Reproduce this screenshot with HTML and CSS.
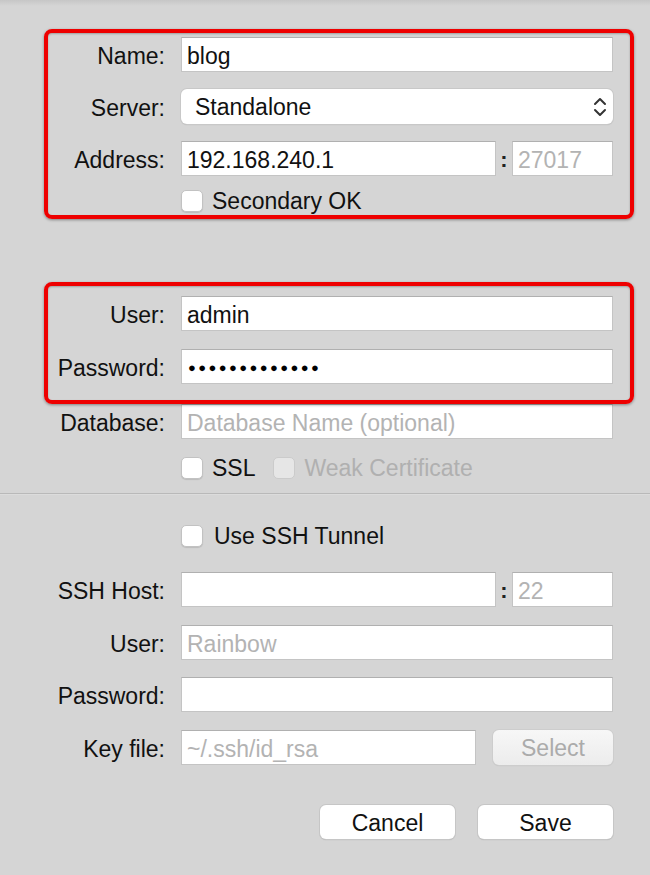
FILE: index.html
```html
<!DOCTYPE html>
<html>
<head>
<meta charset="utf-8">
<link rel="stylesheet" href="styles.css">
</head>
<body>
<div class="win">
  <div class="topshade"></div>

  <div class="row r-name">
    <div class="label">Name:</div>
    <div class="field">blog</div>
  </div>
  <div class="row">
    <div class="label">Server:</div>
    <div class="popup">
      <span>Standalone</span>
      <svg class="updown" width="14" height="22" viewBox="0 0 14 22"><path d="M2 8 L7 3 L12 8 M2 14 L7 19 L12 14" fill="none" stroke="#333" stroke-width="2" stroke-linecap="round" stroke-linejoin="round"/></svg>
    </div>
  </div>
  <div class="row">
    <div class="label">Address:</div>
    <div class="field">192.168.240.1</div>
    <div class="colon">:</div>
    <div class="field port ph">27017</div>
  </div>
  <div class="checkrow r-secondary">
    <span class="box"></span><span class="ctext">Secondary OK</span>
  </div>

  <div class="row r-user">
    <div class="label">User:</div>
    <div class="field">admin</div>
  </div>
  <div class="row r-pass">
    <div class="label">Password:</div>
    <div class="field dots">●●●●●●●●●●●●●</div>
  </div>
  <div class="row r-db">
    <div class="label">Database:</div>
    <div class="field ph">Database Name (optional)</div>
  </div>
  <div class="checkrow r-ssl">
    <span class="box"></span><span class="ctext">SSL</span>
    <span class="box disabled"></span><span class="ctext disabled-text">Weak Certificate</span>
  </div>

  <div class="separator"></div>

  <div class="checkrow r-tunnel">
    <span class="box"></span><span class="ctext wide">Use SSH Tunnel</span>
  </div>

  <div class="row r-host">
    <div class="label">SSH Host:</div>
    <div class="field"></div>
    <div class="colon">:</div>
    <div class="field port ph">22</div>
  </div>
  <div class="row r-suser">
    <div class="label">User:</div>
    <div class="field ph">Rainbow</div>
  </div>
  <div class="row r-spass">
    <div class="label">Password:</div>
    <div class="field"></div>
  </div>
  <div class="row r-key">
    <div class="label">Key file:</div>
    <div class="field ph">~/.ssh/id_rsa</div>
    <div class="btn select">Select</div>
  </div>

  <div class="actions">
    <div class="btn cancel">Cancel</div>
    <div class="btn save">Save</div>
  </div>

  <div class="mark mark1"></div>
  <div class="mark mark2"></div>
</div>
</body>
</html>
```

FILE: styles.css
```css
html, body {
  margin: 0;
  padding: 0;
}
body {
  background: #d5d5d5;
  font-family: "Liberation Sans", Arial, sans-serif;
  color: #111;
}
.win {
  position: relative;
  width: 650px;
  height: 875px;
  overflow: hidden;
  background: #d5d5d5;
}
.topshade {
  height: 6px;
  background: linear-gradient(#c6c6c6, #d5d5d5);
}
.row {
  display: flex;
  align-items: center;
  height: 35px;
  padding-right: 37px;
  margin-top: 17px;
}
.r-name { margin-top: 31px; }
.label {
  flex: none;
  width: 165px;
  margin-right: 16px;
  padding-top: 3px;
  text-align: right;
  font-size: 23px;
  color: #111;
}
.field {
  flex: 1;
  height: 35px;
  box-sizing: border-box;
  background: #fff;
  border: 1px solid #c4c4c4;
  border-top-color: #b0b0b0;
  font-size: 23px;
  padding-left: 5px;
  padding-top: 3px;
  display: flex;
  align-items: center;
  color: #111;
  white-space: nowrap;
  overflow: hidden;
}
.ph { color: #b3b3b3; }
.colon {
  flex: none;
  width: 16px;
  padding-top: 2px;
  text-align: center;
  font-size: 22px;
  font-weight: bold;
  color: #222;
}
.port {
  flex: none;
  width: 101px;
}
.popup {
  flex: 1;
  height: 35px;
  box-sizing: border-box;
  background: #fff;
  border-radius: 6px;
  box-shadow: 0 0 0 1px #c8c8c8, 0 1px 1px rgba(0,0,0,0.18);
  display: flex;
  align-items: center;
  justify-content: space-between;
  padding: 1px 6px 0 14px;
  font-size: 23px;
  color: #111;
}
.updown { display: block; }
.checkrow {
  display: flex;
  align-items: center;
  height: 23px;
  padding-left: 181px;
}
.r-secondary { margin-top: 13px; }
.box {
  flex: none;
  width: 22px;
  height: 22px;
  box-sizing: border-box;
  background: #fff;
  border: 1px solid #c2c2c2;
  border-radius: 5px;
  box-shadow: 0 1px 1px rgba(0,0,0,0.12);
}
.box.disabled {
  background: #e6e6e6;
  border-color: #cbcbcb;
  box-shadow: none;
  margin-left: 18px;
}
.ctext {
  margin-left: 9px;
  padding-top: 2px;
  font-size: 23px;
  color: #111;
}
.ctext.wide { margin-left: 11px; }
.disabled-text { color: #b0b0b0; }
.r-user { margin-top: 84px; }
.r-pass { margin-top: 18px; }
.r-db { margin-top: 20px; }
.dots {
  font-size: 13px;
  letter-spacing: 2.4px;
  color: #000;
  padding-left: 6px;
  padding-top: 2px;
}
.r-ssl { margin-top: 17px; }
.separator {
  margin-top: 14px;
  height: 1px;
  background: #b9b9b9;
  border-bottom: 1px solid #dcdcdc;
}
.r-tunnel { margin-top: 29px; }
.r-host { margin-top: 25px; }
.r-suser { margin-top: 18px; }
.r-spass { margin-top: 17px; }
.r-key { margin-top: 18px; }
.r-key .field {
  flex: none;
  width: 295px;
}
.btn {
  box-sizing: border-box;
  height: 35px;
  border-radius: 6px;
  background: #fff;
  box-shadow: 0 0 0 1px #c6c6c6, 0 1px 1px rgba(0,0,0,0.22);
  display: flex;
  align-items: center;
  justify-content: center;
  padding-top: 2px;
  font-size: 23px;
  color: #111;
}
.select {
  margin-left: 17px;
  flex: 1;
  background: linear-gradient(#f7f7f7, #ececec);
  color: #ababab;
  box-shadow: 0 0 0 1px #cdcdcd, 0 1px 1px rgba(0,0,0,0.12);
}
.actions {
  display: flex;
  justify-content: flex-end;
  gap: 23px;
  padding-right: 37px;
  margin-top: 40px;
}
.cancel, .save {
  width: 135px;
  height: 34px;
}
.mark {
  position: absolute;
  left: 44px;
  width: 590px;
  box-sizing: border-box;
  border: 4px solid #ee0000;
  border-radius: 8px;
  box-shadow: 0 1px 3px rgba(0,0,0,0.4), inset 0 1px 2px rgba(0,0,0,0.25);
  pointer-events: none;
}
.mark1 { top: 29px; height: 190px; }
.mark2 { top: 282px; height: 122px; }
```
